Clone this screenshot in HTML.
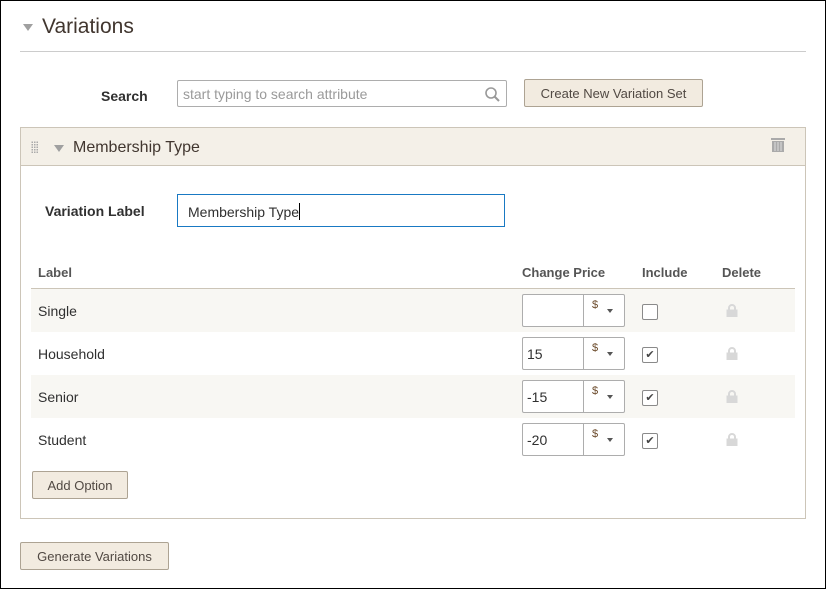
<!DOCTYPE html>
<html><head><style>
*{box-sizing:border-box;margin:0;padding:0}
body{width:826px;height:589px;background:#fff;font-family:"Liberation Sans",sans-serif;color:#303030;position:relative;overflow:hidden}
.a{position:absolute}
.frame{left:0;top:0;width:826px;height:589px;border:1px solid #000}
.btn{background:#f2ebe0;border:1px solid #ada393;border-radius:2px;font-size:13px;color:#514943;text-align:center}
.row{left:31px;width:764px;height:43px;font-size:14px;padding:14px 0 0 7px}
.pin{left:522px;width:103px;height:33px;border:1px solid #adadad;border-radius:2px;background:#fff;font-size:14px}
.pin .v{position:absolute;left:4px;top:8px}
.pin .s{position:absolute;left:60px;top:0;width:1px;height:31px;background:#adadad}
.pin .d{position:absolute;left:69px;top:4px;font-size:11px;color:#6b4b2b}
.pin .c{position:absolute;left:84px;top:14px;border:3px solid transparent;border-top:4px solid #555}
.cb{left:642px;width:16px;height:16px;border:1px solid #8a8a8a;border-radius:2px;background:#fff;font-size:11px;line-height:14px;text-align:center;color:#444}
.lock{left:725px;width:14px;height:14px}
</style></head><body>
<div class="a frame"></div>
<div class="a" style="left:23px;top:24px;border:5px solid transparent;border-top:7px solid #a0a0a0"></div>
<div class="a" style="left:42px;top:15px;font-size:21px;color:#41362f">Variations</div>
<div class="a" style="left:20px;top:51px;width:786px;height:1px;background:#ccc"></div>
<div class="a" style="left:101px;top:88px;font-size:14px;font-weight:bold">Search</div>
<div class="a" style="left:177px;top:80px;width:330px;height:27px;border:1px solid #adadad;border-radius:2px;font-size:14px;color:#9a9a9a;padding:5px 0 0 5px">start typing to search attribute
<svg class="a" style="left:306px;top:5px" width="17" height="17" viewBox="0 0 17 17"><circle cx="7" cy="7" r="5" fill="none" stroke="#999" stroke-width="1.6"/><path d="M10.5 10.5L15 15" stroke="#999" stroke-width="2"/></svg></div>
<div class="a btn" style="left:524px;top:79px;width:179px;height:28px;padding-top:6px">Create New Variation Set</div>
<div class="a" style="left:20px;top:127px;width:786px;height:392px;border:1px solid #ccc5b8"></div>
<div class="a" style="left:21px;top:128px;width:784px;height:38px;background:#f4f0e8;border-bottom:1px solid #ccc5b8"></div>
<div class="a" style="left:31px;top:141px;width:7px;height:13px;background-image:radial-gradient(#aaa 0.8px,transparent 1px);background-size:2.5px 2.5px"></div>
<div class="a" style="left:54px;top:145px;border:5px solid transparent;border-top:7px solid #a0a0a0"></div>
<div class="a" style="left:73px;top:139px;font-size:16px;color:#41362f">Membership Type</div>
<svg class="a" style="left:771px;top:138px" width="14" height="14" viewBox="0 0 14 14"><rect x="0" y="0" width="14" height="2" fill="#aaa"/><rect x="1" y="3" width="12" height="11" fill="#aaa"/><path d="M4 4v9M7 4v9M10 4v9" stroke="#ddd" stroke-width="1"/></svg>
<div class="a" style="left:45px;top:203px;font-size:14px;font-weight:bold">Variation Label</div>
<div class="a" style="left:177px;top:194px;width:328px;height:33px;border:1px solid #1979c3;font-size:14px;padding:8px 0 0 10px">Membership Type<span style="display:inline-block;width:1px;height:17px;background:#000;vertical-align:-3px"></span></div>
<div class="a" style="left:38px;top:265px;font-size:13px;font-weight:bold;color:#555">Label</div>
<div class="a" style="left:522px;top:265px;font-size:13px;font-weight:bold;color:#555">Change Price</div>
<div class="a" style="left:642px;top:265px;font-size:13px;font-weight:bold;color:#555">Include</div>
<div class="a" style="left:722px;top:265px;font-size:13px;font-weight:bold;color:#555">Delete</div>
<div class="a" style="left:31px;top:288px;width:764px;height:1px;background:#ccc5b8"></div>
<div class="a row" style="top:289px;background:#f8f7f3">Single</div>
<div class="a row" style="top:332px">Household</div>
<div class="a row" style="top:375px;background:#f8f7f3">Senior</div>
<div class="a row" style="top:418px">Student</div>
<div class="a pin" style="top:294px"><span class="v"></span><span class="s"></span><span class="d">$</span><span class="c"></span></div>
<div class="a pin" style="top:337px"><span class="v">15</span><span class="s"></span><span class="d">$</span><span class="c"></span></div>
<div class="a pin" style="top:380px"><span class="v">-15</span><span class="s"></span><span class="d">$</span><span class="c"></span></div>
<div class="a pin" style="top:423px"><span class="v">-20</span><span class="s"></span><span class="d">$</span><span class="c"></span></div>
<div class="a cb" style="top:304px"></div>
<div class="a cb" style="top:347px">✔</div>
<div class="a cb" style="top:390px">✔</div>
<div class="a cb" style="top:433px">✔</div>
<svg class="a lock" style="top:303px" viewBox="0 0 14 14"><path d="M4 6.5V5a3 3 0 0 1 6 0v1.5" fill="none" stroke="#d8d8d8" stroke-width="2"/><rect x="1.5" y="6.5" width="11" height="7.5" fill="#d8d8d8"/></svg>
<svg class="a lock" style="top:346px" viewBox="0 0 14 14"><path d="M4 6.5V5a3 3 0 0 1 6 0v1.5" fill="none" stroke="#d8d8d8" stroke-width="2"/><rect x="1.5" y="6.5" width="11" height="7.5" fill="#d8d8d8"/></svg>
<svg class="a lock" style="top:389px" viewBox="0 0 14 14"><path d="M4 6.5V5a3 3 0 0 1 6 0v1.5" fill="none" stroke="#d8d8d8" stroke-width="2"/><rect x="1.5" y="6.5" width="11" height="7.5" fill="#d8d8d8"/></svg>
<svg class="a lock" style="top:432px" viewBox="0 0 14 14"><path d="M4 6.5V5a3 3 0 0 1 6 0v1.5" fill="none" stroke="#d8d8d8" stroke-width="2"/><rect x="1.5" y="6.5" width="11" height="7.5" fill="#d8d8d8"/></svg>
<div class="a btn" style="left:32px;top:471px;width:96px;height:28px;padding-top:6px">Add Option</div>
<div class="a btn" style="left:20px;top:542px;width:149px;height:28px;padding-top:6px">Generate Variations</div>
</body></html>
